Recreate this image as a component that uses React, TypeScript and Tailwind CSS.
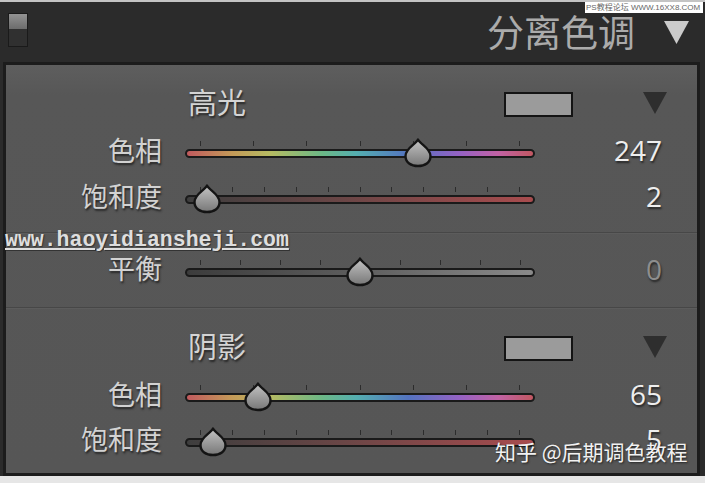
import React from "react";

const CJK = "font-['Noto_Sans_CJK_SC','Noto_Sans',sans-serif]";
const shadow = "[text-shadow:1px_2px_2px_#262626]";

const hueTicks = [0, 1, 2, 3, 4, 5, 6].map((i) => 15 + i * 53.2);
const satTicks = [0, 1, 2, 3, 4, 5, 6, 7, 8, 9, 10].map((i) => 15 + i * 31.9);
const balTicks = [0, 1, 2, 3, 4, 5, 6, 7, 8].map((i) => 15 + i * 40);

function Thumb({ x, id }: { x: number; id: string }) {
  return (
    <svg width="30" height="30" viewBox="0 0 30 30" className="absolute top-[2px]" style={{ left: x - 15 }}>
      <defs>
        <linearGradient id={id} x1="0" y1="0" x2="0" y2="1">
          <stop offset="0" stopColor="#c4c4c4" />
          <stop offset="1" stopColor="#777" />
        </linearGradient>
      </defs>
      <path
        d="M15 1.5 C17.5 6.5 27.5 10 27.5 18 C27.5 24.5 22 28 15 28 C8 28 2.5 24.5 2.5 18 C2.5 10 12.5 6.5 15 1.5 Z"
        fill={`url(#${id})`}
        stroke="#141414"
        strokeWidth="2.4"
        strokeLinejoin="round"
      />
    </svg>
  );
}

function Slider({ kind, pos, id }: { kind: "hue" | "sat" | "bal"; pos: number; id: string }) {
  const ticks = kind === "hue" ? hueTicks : kind === "sat" ? satTicks : balTicks;
  const track =
    kind === "hue"
      ? "bg-[linear-gradient(90deg,#c05a5e_0%,#c49a58_13%,#b6bb62_24%,#6cb886_39%,#54aeb0_49%,#5473c0_64%,#9662c4_79%,#c262a4_90%,#c25862_100%)]"
      : kind === "sat"
      ? "bg-[linear-gradient(90deg,#3e3e3e_0%,#6a4646_45%,#a84c4e_100%)]"
      : "bg-[linear-gradient(90deg,#3c3c3c_0%,#5e5e5e_50%,#8a8a8a_100%)]";
  return (
    <div className="relative w-[350px] h-[32px] shrink-0">
      {ticks.map((t, i) => (
        <div
          key={i}
          className="absolute top-[5px] w-px h-[5px] bg-[#2c2c2c]"
          style={{ left: Math.round(t) }}
        />
      ))}
      <div className={`absolute left-0 top-[13px] w-[350px] h-[9px] rounded-full border-2 border-[#1a1a1a] ${track}`} />
      <Thumb x={pos} id={id} />
    </div>
  );
}

function SliderRow({
  label, kind, pos, value, id, h, dim,
}: { label: string; kind: "hue" | "sat" | "bal"; pos: number; value: string; id: string; h: string; dim?: boolean }) {
  return (
    <div className={`flex items-center ${h}`}>
      <div className={`w-[156px] mb-[6px] text-right text-[27px] leading-none text-[#d2d2d2] ${CJK} ${shadow}`}>{label}</div>
      <div className="ml-[23px]">
        <Slider kind={kind} pos={pos} id={id} />
      </div>
      <div
        className={`w-[127px] mb-[4px] text-right text-[28px] leading-none font-['Open_Sans',sans-serif] ${shadow} ${
          dim ? "text-[#8e8e8e]" : "text-[#eeeeee]"
        }`}
      >
        {value}
      </div>
    </div>
  );
}

function SectionHeader({ title }: { title: string }) {
  return (
    <div className="flex items-center h-[48px]">
      <div className="w-[182px]" />
      <div className={`w-[316px] mb-[6px] text-[29px] leading-none text-[#d4d4d4] ${CJK} ${shadow}`}>{title}</div>
      <div className="w-[69px] h-[25px] border-2 border-[#141414] bg-[#9b9b9b]" />
      <svg width="24" height="22" viewBox="0 0 24 22" className="ml-[70px] mb-[2px]">
        <polygon points="0,0 24,0 12,22" fill="#2e2e2e" />
      </svg>
    </div>
  );
}

export default function App() {
  return (
    <div className="relative w-[705px] h-[483px] overflow-hidden bg-[#2b2b2b] flex flex-col">
      <div className="h-[2px] bg-[#c4c4c4]" />

      {/* header */}
      <div className="h-[60px] flex items-center">
        <div className="self-start mt-[11px] ml-[8px] w-[20px] h-[34px] border border-[#1a1a1a] flex flex-col">
          <div className="h-[15px] bg-[linear-gradient(180deg,#939393,#6c6c6c)]" />
          <div className="flex-1 bg-[#303030]" />
        </div>
        <div className={`ml-auto mb-[2px] text-[37px] leading-none text-[#ababab] ${CJK}`}>分离色调</div>
        <svg width="25" height="23" viewBox="0 0 25 23" className="ml-[29px] mr-[16px]">
          <polygon points="0,0 25,0 12.5,23" fill="#cbcbcb" />
        </svg>
      </div>

      {/* panel */}
      <div className="ml-[3px] w-[697px] h-[414px] border-[3px] border-[#1c1c1c] bg-[linear-gradient(180deg,#5e5e5e_0px,#575757_30px,#565656_100%)] flex flex-col">
        <div className="pt-[15px] h-[167px]">
          <SectionHeader title="高光" />
          <SliderRow label="色相" kind="hue" pos={233} value="247" id="t1" h="h-[48px]" />
          <SliderRow label="饱和度" kind="sat" pos={22} value="2" id="t2" h="h-[44px]" />
        </div>
        <div className="border-t border-[#474747] border-b">
          <div className="border-t border-[#5c5c5c]">
            <SliderRow label="平衡" kind="bal" pos={175} value="0" id="t3" h="h-[73px]" dim />
          </div>
        </div>
        <div className="border-t border-[#5c5c5c] pt-[15px]">
          <SectionHeader title="阴影" />
          <SliderRow label="色相" kind="hue" pos={73} value="65" id="t4" h="h-[48px]" />
          <SliderRow label="饱和度" kind="sat" pos={28} value="5" id="t5" h="h-[42px]" />
        </div>
      </div>

      <div className="flex-1 bg-[#e6e6e6]" />

      {/* watermarks */}
      <div className="absolute top-[2px] left-[585px] w-[118px] h-[11px] bg-white flex items-center px-[1px] text-[8px] leading-none text-[#666] whitespace-nowrap font-['Liberation_Sans','Noto_Sans_CJK_SC',sans-serif]">
        PS教程论坛 WWW.16XX8.COM
      </div>
      <div className="absolute top-[230px] left-[5px] text-[21.5px] leading-none font-bold underline text-[#dedede] font-['Liberation_Mono',monospace] [text-shadow:1px_1px_1px_#333]">
        www.haoyidiansheji.com
      </div>
      <div className={`absolute top-[441px] left-[495px] text-[21px] leading-none text-[#f2f2f2] whitespace-nowrap ${CJK} [text-shadow:1px_1px_2px_#222]`}>
        知乎 @后期调色教程
      </div>
    </div>
  );
}
